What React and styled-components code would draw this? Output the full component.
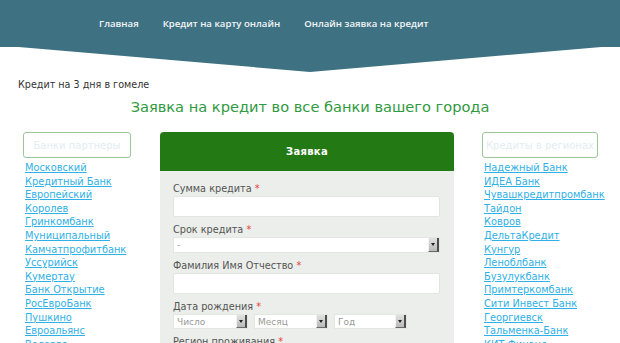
import React from 'react';
import styled, { createGlobalStyle } from 'styled-components';

const GlobalStyle = createGlobalStyle`
    html, body {
        margin: 0;
        padding: 0;
        background: #fff;
        overflow: hidden;
    }
    body {
        font-family: "DejaVu Sans", "Liberation Sans", sans-serif;
    }
`;

const Page = styled.div`
    width: 620px;
    height: 343px;
    overflow: hidden;
`;

const Header = styled.header`
    height: 72px;
    background-color: #3e7283;
    clip-path: polygon(0 0, 100% 0, 100% 47px, 97% 47px, 50% 72px, 3% 47px, 0 47px);
`;

const Nav = styled.nav`
    display: flex;
    gap: 24px;
    height: 47px;
    align-items: center;
    padding-left: 99px;
`;

const NavLink = styled.a`
    color: #f2f5f6;
    font-family: "Open Sans", sans-serif;
    font-weight: 600;
    font-size: 9.6px;
    text-decoration: none;
    white-space: nowrap;
`;

const Crumb = styled.p`
    margin: 6px 0 0 18px;
    font-size: 9.6px;
    line-height: 13px;
    color: #333;
`;

const Title = styled.h1`
    margin: 6px 0 0;
    text-align: center;
    font-weight: 400;
    font-size: 14.6px;
    line-height: 20px;
    color: #2f9a41;
`;

const Columns = styled.div`
    display: flex;
    align-items: flex-start;
    gap: 29px;
    padding-left: 23px;
    margin-top: 15px;
`;

const Side = styled.aside`
    display: flex;
    flex-direction: column;
    width: ${p => p.$width}px;
    flex-shrink: 0;
`;

const SideBox = styled.div`
    height: 26px;
    box-sizing: border-box;
    border: 1.5px solid #9dc79a;
    border-radius: 3px;
    display: flex;
    align-items: center;
    justify-content: center;
    font-size: 10px;
    color: #e2edf2;
    margin-bottom: 3px;
    white-space: nowrap;
`;

const BankLink = styled.a`
    display: block;
    padding-left: 2px;
    font-size: 9.8px;
    line-height: 13.6px;
    color: #2fb0e6;
    text-decoration: underline;
    white-space: nowrap;
`;

const Form = styled.section`
    width: 294px;
    flex-shrink: 0;
    margin-right: -1px;
    border-radius: 4px 4px 0 0;
    background: #ebeeea;
    overflow: hidden;
`;

const FormHead = styled.div`
    height: 39px;
    background: #237a14;
    display: flex;
    align-items: center;
    justify-content: center;
    color: #fff;
    font-weight: bold;
    font-size: 10px;
    letter-spacing: 0.3px;
`;

const FormBody = styled.div`
    display: flex;
    flex-direction: column;
    gap: 6px;
    padding: 11px 14px 20px 13px;
`;

const Group = styled.div`
    display: flex;
    flex-direction: column;
`;

const Label = styled.label`
    font-size: 9.7px;
    line-height: 13px;
    margin-bottom: 1px;
    color: #555;
    white-space: nowrap;

    span {
        color: #e8403a;
    }
`;

const Input = styled.div`
    height: 21px;
    box-sizing: border-box;
    background: #fff;
    border: 1px solid #e2e5e2;
    border-radius: 2px;
`;

const Select = styled.div`
    display: flex;
    align-items: center;
    justify-content: space-between;
    height: ${p => p.$height || 16}px;
    width: ${p => (p.$width ? `${p.$width}px` : '100%')};
    box-sizing: border-box;
    background: #fff;
    border: 1px solid #e4e6e4;
    padding-left: 3px;
    font-size: 9px;
    color: #999;
`;

const Arrow = styled.div`
    width: 11px;
    height: 100%;
    box-sizing: border-box;
    background: linear-gradient(#e2e2e2, #b9b9b9);
    border-right: 2px solid #4d4d4d;
    border-bottom: 1px solid #6a6a6a;
    border-left: 1px solid #f2f2f2;
    display: flex;
    align-items: center;
    justify-content: center;

    &::after {
        content: '';
        border-left: 2.5px solid transparent;
        border-right: 2.5px solid transparent;
        border-top: 3px solid #222;
    }
`;

const DateRow = styled.div`
    display: flex;
    gap: 6px;
`;

const leftBanks = [
    'Московский', 'Кредитный Банк', 'Европейский', 'Королев', 'Гринкомбанк',
    'Муниципальный', 'Камчатпрофитбанк', 'Уссурийск', 'Кумертау', 'Банк Открытие',
    'РосЕвроБанк', 'Пушкино', 'Евроальянс', 'Вологда',
];

const rightBanks = [
    'Надежный Банк', 'ИДЕА Банк', 'Чувашкредитпромбанк', 'Тайдон', 'Ковров',
    'ДельтаКредит', 'Кунгур', 'Леноблбанк', 'Бузулукбанк', 'Примтеркомбанк',
    'Сити Инвест Банк', 'Георгиевск', 'Тальменка-Банк', 'КИТ Финанс',
];

const Field = ({ label, children }) => (
    <Group>
        <Label>{label} <span>*</span></Label>
        {children}
    </Group>
);

const App = () => {
    return (
        <Page>
            <GlobalStyle />
            <Header>
                <Nav>
                    <NavLink>Главная</NavLink>
                    <NavLink>Кредит на карту онлайн</NavLink>
                    <NavLink>Онлайн заявка на кредит</NavLink>
                </Nav>
            </Header>
            <Crumb>Кредит на 3 дня в гомеле</Crumb>
            <Title>Заявка на кредит во все банки вашего города</Title>
            <Columns>
                <Side $width={108}>
                    <SideBox>Банки партнеры</SideBox>
                    {leftBanks.map(b => <BankLink key={b}>{b}</BankLink>)}
                </Side>
                <Form>
                    <FormHead>Заявка</FormHead>
                    <FormBody>
                        <Field label="Сумма кредита">
                            <Input />
                        </Field>
                        <Field label="Срок кредита">
                            <Select>- <Arrow /></Select>
                        </Field>
                        <Field label="Фамилия Имя Отчество">
                            <Input />
                        </Field>
                        <Field label="Дата рождения">
                            <DateRow>
                                <Select $width={75} $height={15}>Число <Arrow /></Select>
                                <Select $width={74} $height={15}>Месяц <Arrow /></Select>
                                <Select $width={73} $height={15}>Год <Arrow /></Select>
                            </DateRow>
                        </Field>
                        <Field label="Регион проживания">
                            <Input />
                        </Field>
                    </FormBody>
                </Form>
                <Side $width={116}>
                    <SideBox>Кредиты в регионах</SideBox>
                    {rightBanks.map(b => <BankLink key={b}>{b}</BankLink>)}
                </Side>
            </Columns>
        </Page>
    );
};

export default App;
